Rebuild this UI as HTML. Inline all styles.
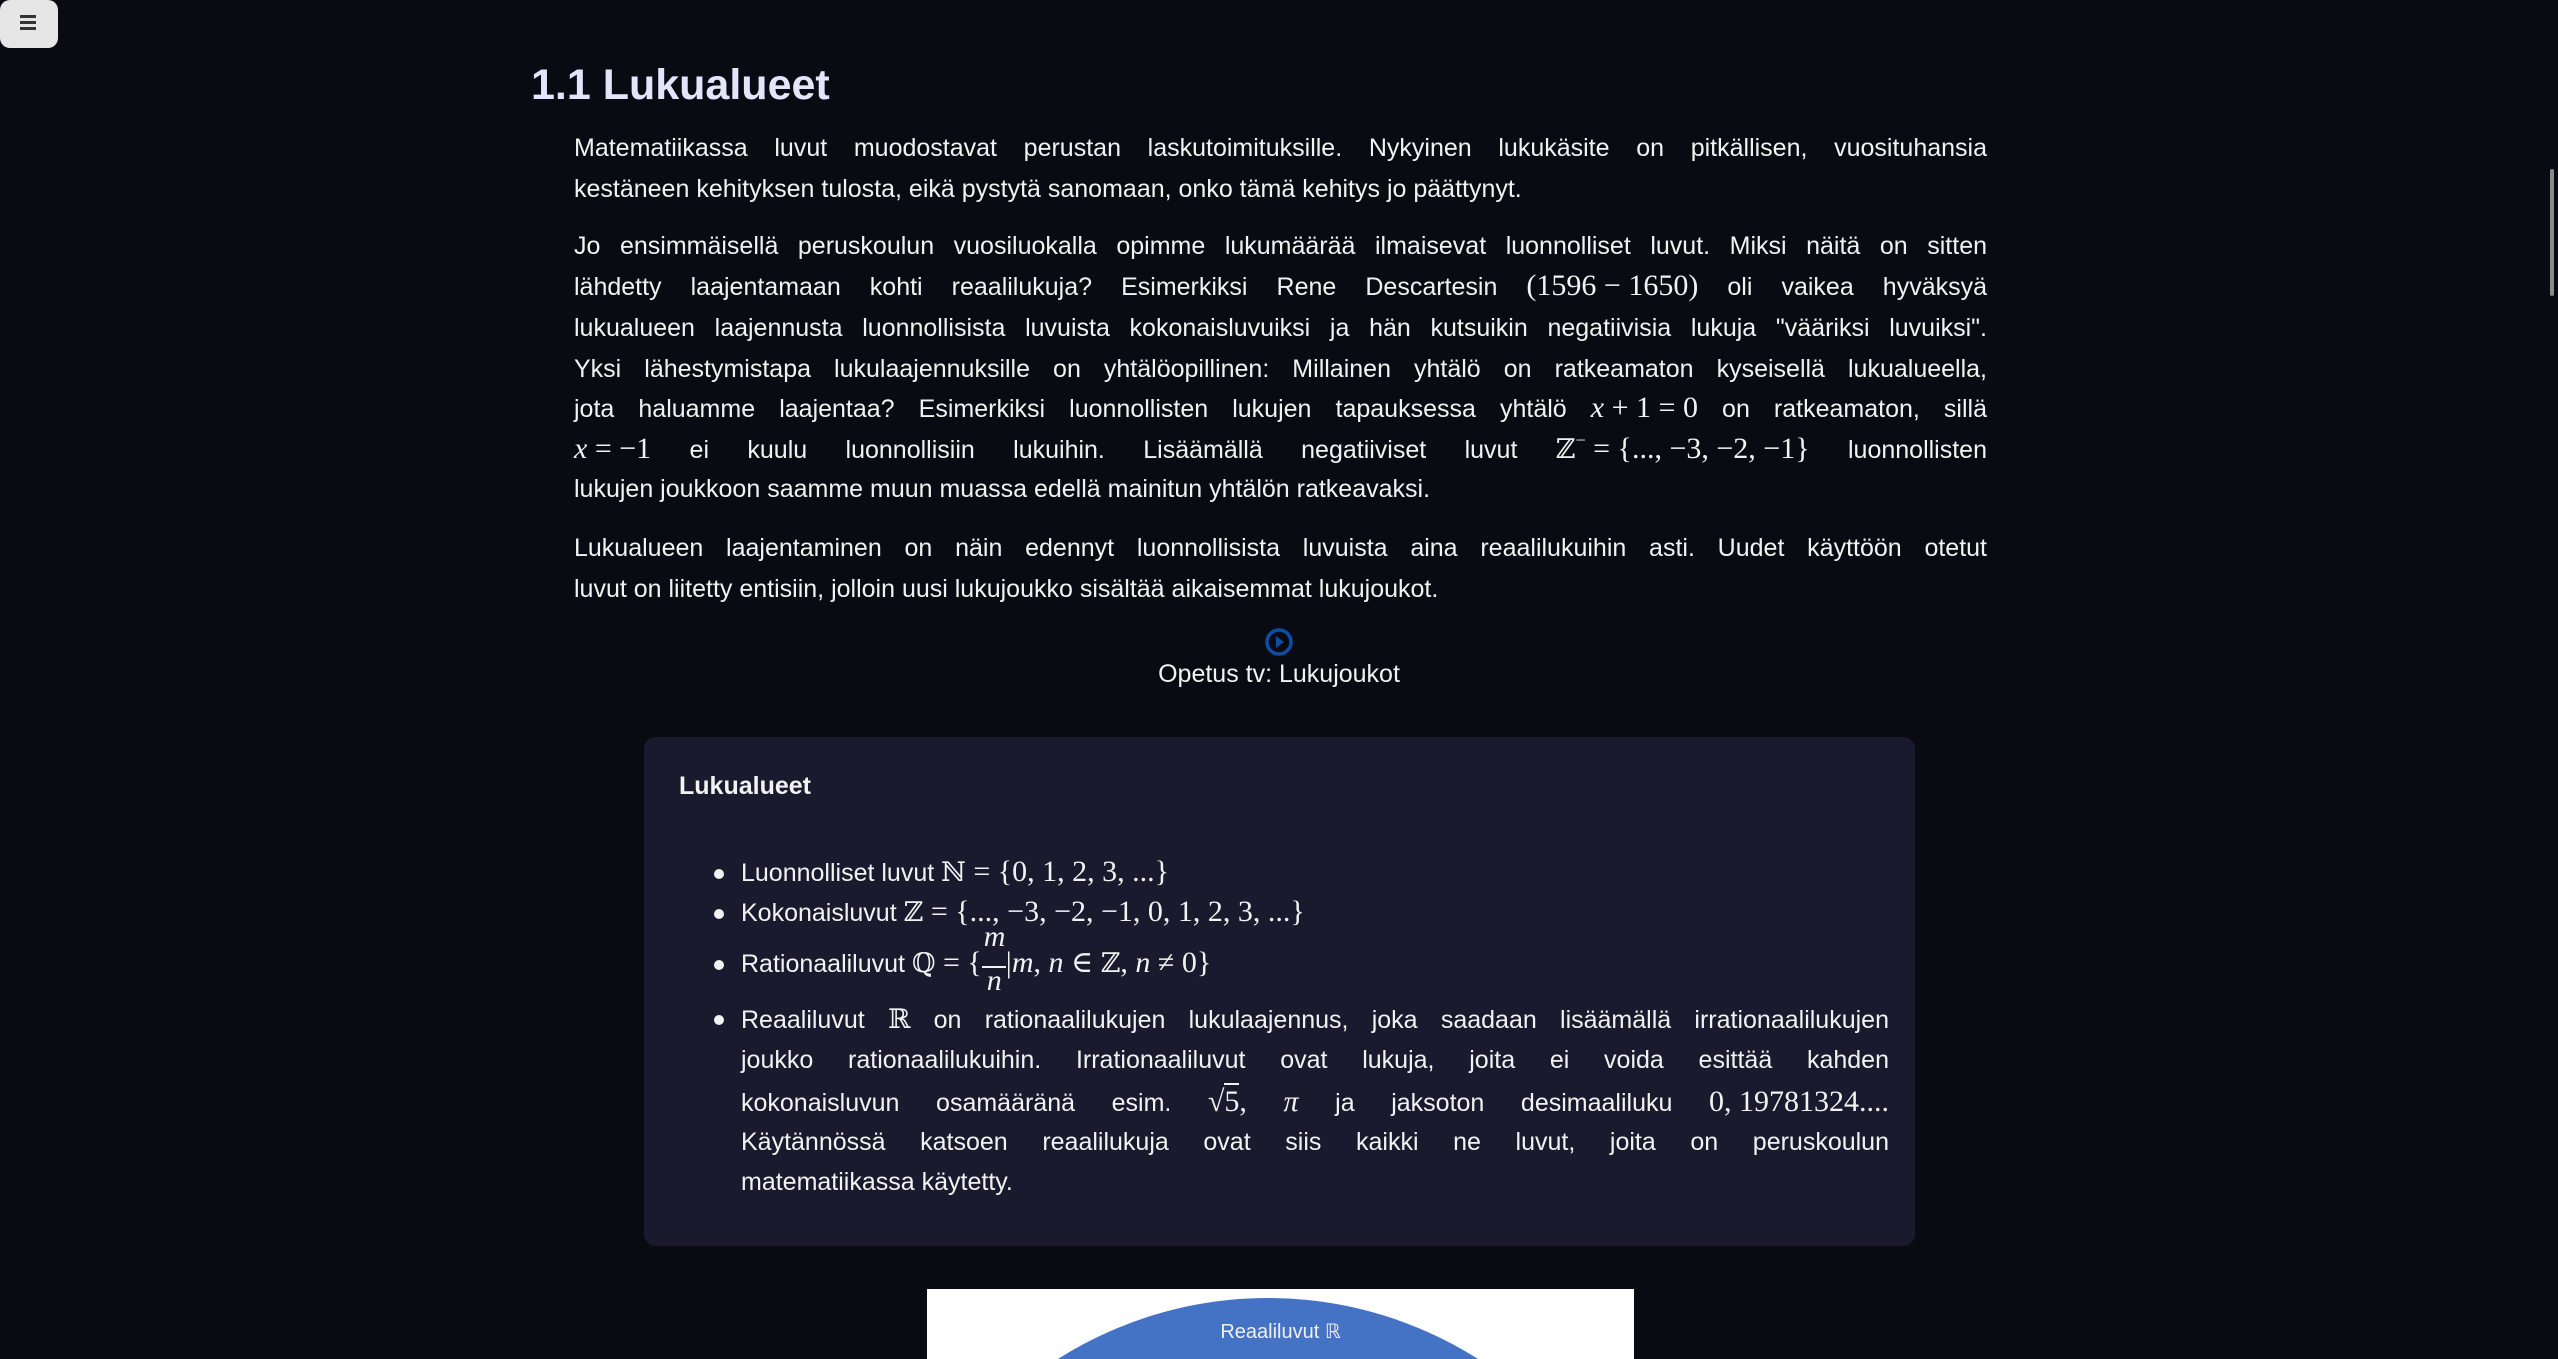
<!DOCTYPE html>
<html><head><meta charset="utf-8">
<style>
html,body{margin:0;padding:0;overflow:hidden;}
body{width:2558px;height:1359px;background:#0a0b12;position:relative;font-family:"Liberation Sans","DejaVu Sans",sans-serif;color:#f2f2f2;}
.l{position:absolute;height:41px;line-height:41px;font-size:25px;white-space:nowrap;overflow:visible;}
.j{text-align:justify;text-align-last:justify;white-space:normal;}
.m{display:inline-block;white-space:nowrap;line-height:30px;vertical-align:baseline;font-family:"Liberation Serif","DejaVu Serif",serif;font-size:30px;}
.bb{font-family:"DejaVu Serif",serif;font-size:27px;}
i{font-family:"Liberation Serif",serif;font-style:italic;font-size:30px;}
.p{left:574px;width:1413px;}
.b{left:741px;width:1148px;}
.dot{position:absolute;left:714px;width:10px;height:10px;border-radius:50%;background:#f2f2f2;}
</style></head><body>
<div style="position:absolute;left:0;top:0;width:58px;height:48px;background:#e6e6e6;border-radius:10px;"></div>
<div style="position:absolute;left:20px;top:15px;width:16px;height:3px;background:#333;box-shadow:0 6px 0 #333,0 12px 0 #333;"></div>
<div style="position:absolute;left:2550px;top:169px;width:4px;height:127px;background:#8a8a8a;border-radius:2px;"></div>

<div style="position:absolute;left:531px;top:58px;font-size:43px;font-weight:bold;color:#e6e4fa;line-height:54px;">1.1 Lukualueet</div>

<div class="l p j" style="top:128px">Matematiikassa luvut muodostavat perustan laskutoimituksille. Nykyinen lukukäsite on pitkällisen, vuosituhansia</div>
<div class="l p" style="top:169px">kestäneen kehityksen tulosta, eikä pystytä sanomaan, onko tämä kehitys jo päättynyt.</div>

<div class="l p j" style="top:226px">Jo ensimmäisellä peruskoulun vuosiluokalla opimme lukumäärää ilmaisevat luonnolliset luvut. Miksi näitä on sitten</div>
<div class="l p j" style="top:267px">lähdetty laajentamaan kohti reaalilukuja? Esimerkiksi Rene Descartesin <span class="m">(1596 − 1650)</span> oli vaikea hyväksyä</div>
<div class="l p j" style="top:308px">lukualueen laajennusta luonnollisista luvuista kokonaisluvuiksi ja hän kutsuikin negatiivisia lukuja "vääriksi luvuiksi".</div>
<div class="l p j" style="top:349px">Yksi lähestymistapa lukulaajennuksille on yhtälöopillinen: Millainen yhtälö on ratkeamaton kyseisellä lukualueella,</div>
<div class="l p j" style="top:389px">jota haluamme laajentaa? Esimerkiksi luonnollisten lukujen tapauksessa yhtälö <span class="m"><i>x</i> + 1 = 0</span> on ratkeamaton, sillä</div>
<div class="l p j" style="top:430px"><span class="m"><i>x</i> = −1</span> ei kuulu luonnollisiin lukuihin. Lisäämällä negatiiviset luvut <span class="m"><span class="bb">ℤ</span><span style="font-size:18px;position:relative;top:-12px">−</span> = {..., −3, −2, −1}</span> luonnollisten</div>
<div class="l p" style="top:469px">lukujen joukkoon saamme muun muassa edellä mainitun yhtälön ratkeavaksi.</div>

<div class="l p j" style="top:528px">Lukualueen laajentaminen on näin edennyt luonnollisista luvuista aina reaalilukuihin asti. Uudet käyttöön otetut</div>
<div class="l p" style="top:569px">luvut on liitetty entisiin, jolloin uusi lukujoukko sisältää aikaisemmat lukujoukot.</div>

<svg style="position:absolute;left:1263px;top:626px" width="32" height="32" viewBox="0 0 32 32"><circle cx="16" cy="16" r="12" fill="none" stroke="#0b4ea2" stroke-width="3.5"/><path d="M13 10 L21 16 L13 22 Z" fill="#0b4ea2"/></svg>
<div class="l" style="left:0;width:2558px;text-align:center;top:654px;">Opetus tv: Lukujoukot</div>

<div style="position:absolute;left:644px;top:737px;width:1271px;height:509px;background:#1a1a2e;border-radius:12px;"></div>
<div class="l" style="left:679px;top:766px;font-weight:bold;">Lukualueet</div>

<div class="dot" style="top:869px"></div>
<div class="l b" style="top:853px">Luonnolliset luvut <span class="m"><span class="bb">ℕ</span> = {0, 1, 2, 3, ...}</span></div>
<div class="dot" style="top:909px"></div>
<div class="l b" style="top:893px">Kokonaisluvut <span class="m"><span class="bb">ℤ</span> = {..., −3, −2, −1, 0, 1, 2, 3, ...}</span></div>
<div class="dot" style="top:960px"></div>
<div class="l b" style="top:944px">Rationaaliluvut <span class="m"><span class="bb">ℚ</span> = {</span><span style="position:relative;display:inline-block;width:24px;height:41px;vertical-align:top;"><i style="position:absolute;left:2px;top:-22px;line-height:30px">m</i><span style="position:absolute;left:0;width:24px;top:22px;border-top:2px solid #f2f2f2"></span><i style="position:absolute;left:5px;top:22px;line-height:30px">n</i></span><span class="m">|<i>m</i>, <i>n</i> ∈ <span class="bb">ℤ</span>, <i>n</i> ≠ 0}</span></div>
<div class="dot" style="top:1015px"></div>
<div class="l b j" style="top:999px">Reaaliluvut <span class="bb">ℝ</span> on rationaalilukujen lukulaajennus, joka saadaan lisäämällä irrationaalilukujen</div>
<div class="l b j" style="top:1040px">joukko rationaalilukuihin. Irrationaaliluvut ovat lukuja, joita ei voida esittää kahden</div>
<div class="l b j" style="top:1081px">kokonaisluvun osamääränä esim. <span class="m">√<span style="border-top:2px solid #f2f2f2">5</span>,</span> <i>π</i> ja jaksoton desimaaliluku <span class="m">0, 19781324....</span></div>
<div class="l b j" style="top:1122px">Käytännössä katsoen reaalilukuja ovat siis kaikki ne luvut, joita on peruskoulun</div>
<div class="l b" style="top:1162px">matematiikassa käytetty.</div>

<div style="position:absolute;left:927px;top:1289px;width:707px;height:70px;background:#fff;overflow:hidden;">
 <div style="position:absolute;left:-51px;top:9px;width:784px;height:784px;border-radius:50%;background:#4472c4;"></div>
 <div style="position:absolute;left:0;width:707px;text-align:center;top:31px;font-size:20px;line-height:24px;color:#f0f0f0;">Reaaliluvut ℝ</div>
</div>
</body></html>
